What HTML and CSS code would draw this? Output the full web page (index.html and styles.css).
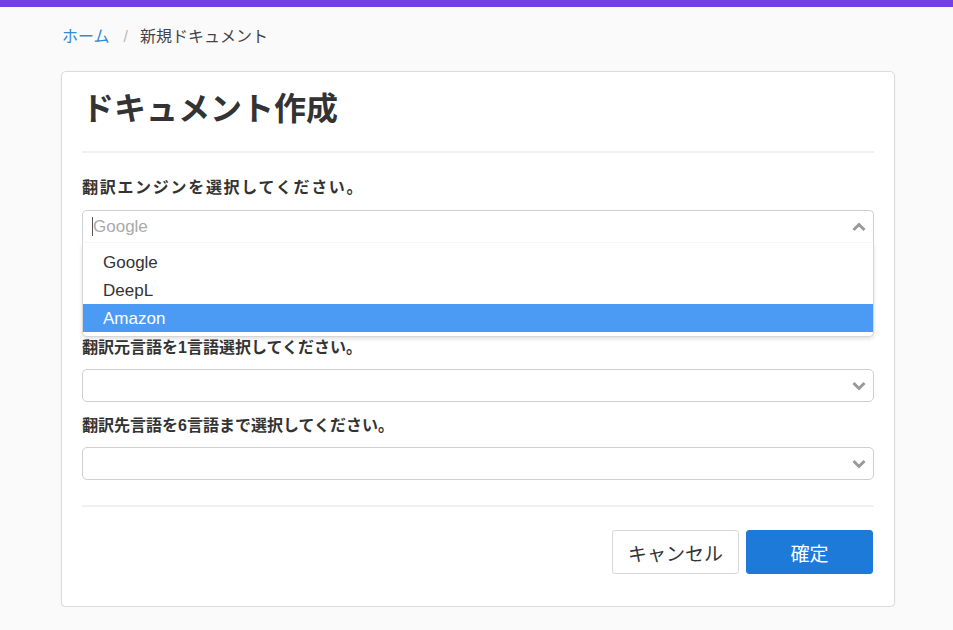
FILE: index.html
```html
<!DOCTYPE html>
<html lang="ja">
<head>
<meta charset="utf-8">
<title>ドキュメント作成</title>
<link rel="stylesheet" href="styles.css">
</head>
<body>
<div class="topbar"></div>
<nav class="breadcrumb">
  <a class="crumb-link" href="#">ホーム</a>
  <span class="crumb-sep">/</span>
  <span class="crumb-current">新規ドキュメント</span>
</nav>
<main class="card">
  <h1 class="title">ドキュメント作成</h1>
  <div class="divider"></div>
  <div class="field field-first">
    <div class="label label-wide">翻訳エンジンを選択してください。</div>
    <div class="select open">
      <div class="select-box">
        <span class="caret"></span><span class="placeholder">Google</span>
        <svg class="chevron" width="14" height="10" viewBox="0 0 14 10"><path d="M1.5 8 L7 2.5 L12.5 8" fill="none" stroke="#999" stroke-width="3"/></svg>
      </div>
      <ul class="options">
        <li class="option">Google</li>
        <li class="option">DeepL</li>
        <li class="option active">Amazon</li>
      </ul>
    </div>
  </div>
  <div class="field field-tight">
    <div class="label">翻訳元言語を1言語選択してください。</div>
    <div class="select">
      <div class="select-box">
        <svg class="chevron" width="14" height="10" viewBox="0 0 14 10"><path d="M1.5 2 L7 7.5 L12.5 2" fill="none" stroke="#999" stroke-width="3"/></svg>
      </div>
    </div>
  </div>
  <div class="field">
    <div class="label">翻訳先言語を6言語まで選択してください。</div>
    <div class="select">
      <div class="select-box">
        <svg class="chevron" width="14" height="10" viewBox="0 0 14 10"><path d="M1.5 2 L7 7.5 L12.5 2" fill="none" stroke="#999" stroke-width="3"/></svg>
      </div>
    </div>
  </div>
  <div class="divider divider-bottom"></div>
  <div class="actions">
    <button class="btn btn-cancel">キャンセル</button>
    <button class="btn btn-primary">確定</button>
  </div>
</main>
</body>
</html>
```

FILE: styles.css
```css
* { box-sizing: border-box; }
html, body {
  margin: 0;
  padding: 0;
  background: #fafafa;
  font-family: "Liberation Sans", "Noto Sans CJK JP", sans-serif;
  color: #333;
}
.topbar {
  height: 7px;
  background: #6f42e1;
}
.breadcrumb {
  display: flex;
  align-items: center;
  padding: 14px 0 0 62px;
  height: 46px;
  font-size: 16px;
  line-height: 22px;
}
.crumb-link {
  color: #3489d8;
  text-decoration: none;
}
.crumb-sep {
  color: #bbb;
  margin: 0 12px 0 14px;
}
.crumb-current {
  color: #444;
}
.card {
  margin: 18px 0 0 61px;
  width: 834px;
  background: #fff;
  border: 1px solid #dcdcdc;
  border-radius: 5px;
  box-shadow: 0 1px 2px rgba(0,0,0,0.08);
  padding: 17px 20px 32px 20px;
}
.title {
  margin: 0;
  font-size: 32px;
  line-height: 40px;
  font-weight: bold;
  color: #333;
}
.divider {
  height: 2px;
  background: #f0f0f0;
  margin-top: 22px;
}
.field {
  margin-top: 14px;
}
.field-first { margin-top: 25px; }
.field-tight { margin-top: 1px; }
.label {
  font-size: 16px;
  line-height: 20px;
  font-weight: bold;
  color: #333;
  margin-bottom: 11px;
}
.label-wide {
  letter-spacing: 1.7px;
  margin-bottom: 12px;
}
.select-box {
  position: relative;
  height: 33px;
  border: 1px solid #cfcfcf;
  border-radius: 5px;
  background: #fff;
  display: flex;
  align-items: center;
  padding-left: 9px;
}
.select.open .select-box {
  border-bottom-left-radius: 0;
  border-bottom-right-radius: 0;
  border-bottom: 1px solid #f6f6f6;
}
.caret {
  width: 1px;
  height: 19px;
  background: #555;
}
.placeholder {
  font-size: 17px;
  color: #aaa;
}
.chevron {
  position: absolute;
  right: 7px;
  top: 11px;
}
.options {
  list-style: none;
  margin: 0;
  padding: 5px 0 4px 0;
  border: 1px solid #d6d6d6;
  border-top: none;
  border-radius: 0 0 5px 5px;
  background: #fff;
  box-shadow: 0 2px 4px rgba(0,0,0,0.12);
}
.option {
  height: 28px;
  line-height: 29px;
  padding-left: 20px;
  font-size: 17px;
  color: #333;
}
.option.active {
  background: #4b9af4;
  color: #fff;
}
.divider-bottom {
  margin-top: 25px;
}
.actions {
  display: flex;
  justify-content: flex-end;
  gap: 7px;
  margin-top: 23px;
  padding-right: 1px;
}
.btn {
  width: 127px;
  height: 44px;
  border-radius: 3px;
  font-family: "Liberation Sans", "Noto Sans CJK JP", sans-serif;
  font-size: 19px;
  cursor: pointer;
}
.btn-cancel {
  background: #fff;
  border: 1px solid #d8d8d8;
  color: #333;
}
.btn-primary {
  background: #1e7ad8;
  border: 1px solid #1e7ad8;
  color: #fff;
}
```
